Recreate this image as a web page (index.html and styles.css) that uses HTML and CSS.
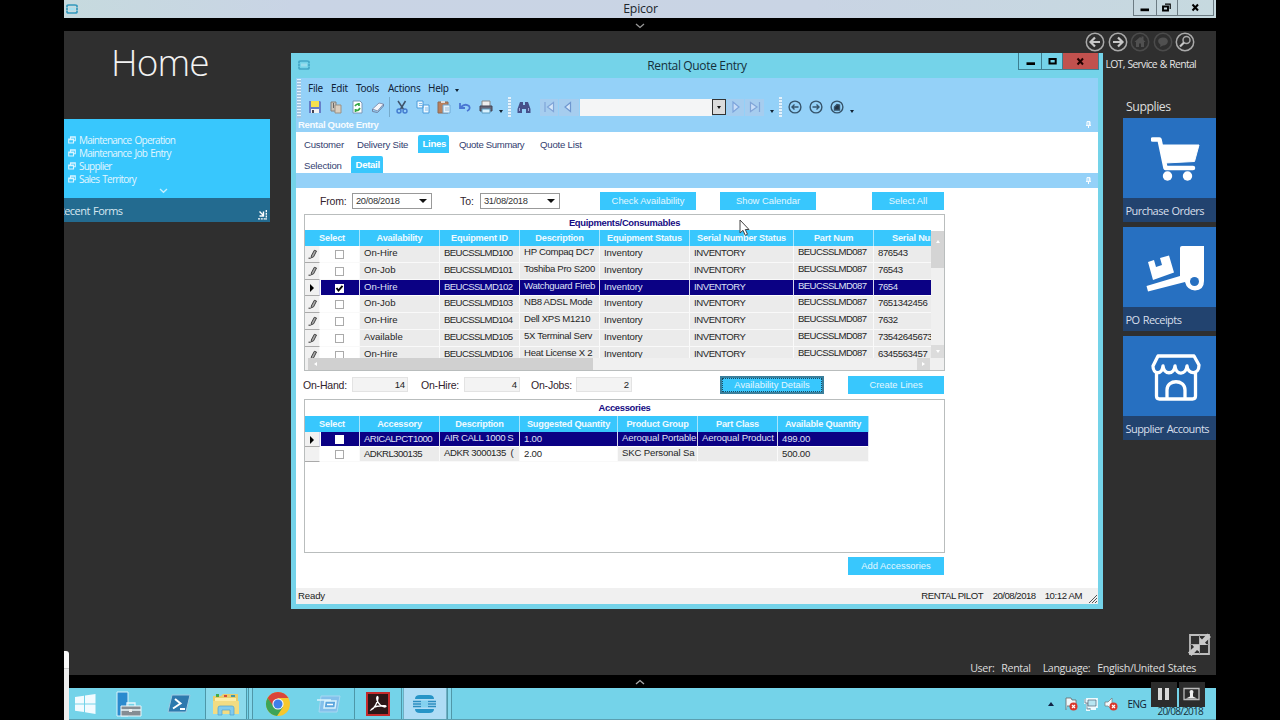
FILE: index.html
```html
<!DOCTYPE html>
<html lang="en">
<head>
<meta charset="utf-8">
<title>Epicor</title>
<link rel="stylesheet" href="styles.css">
</head>
<body>
<svg width="0" height="0" class="defs">
  <symbol id="forms" viewBox="0 0 8 8"><path d="M2.500 3V.8h4.800v4H5.500M.7 3h4.800v4H.7zM.7 3.600h4.800M2.500 1.300h4.800" fill="none" stroke="#d9f4ff" stroke-width="1.100"/></symbol>
  <symbol id="pencil" viewBox="0 0 10 10"><path d="M3.300 7 6.300 1.300 8.500 2 5.600 7.800 3.300 8.800z" fill="#aaa" stroke="#333" stroke-width=".9"/><path d="M.5 9.200h2.300" stroke="#333"/></symbol>
  <symbol id="pin" viewBox="0 0 5 7"><path d="M1 4V.6h3V4M0 4.400h5M2.500 4.500V7M3.200 1v3" fill="none" stroke="#fff"/></symbol>
  <symbol id="epicor" viewBox="0 0 12 10"><path d="M1 3.500V2q0-1 2-1h6q2 0 2 1v1.500M1 6.500V8q0 1 2 1h6q2 0 2-1V6.500M1 4v2M11 4v2" fill="none" stroke="#3399bd" stroke-width="1.700"/><path d="M3 3.500h6v3H3z" fill="#a7e0ef"/></symbol>
</svg>
<div class="screen">
  <header class="appbar">
    <svg class="applogo" width="12" height="10"><use href="#epicor"/></svg>
    <span class="apptitle">Epicor</span>
    <div class="appbtns">
      <span class="wb w23"><svg width="9" height="9"><path d="M.5 5.500h8.500v2.700H.5z"/></svg></span>
      <span class="wb w21"><svg width="9" height="9" fill="none" stroke="#000"><path d="M1 3.500h5v4H1z" stroke-width="1.900"/><path d="M3 1.200h5.200V6" stroke-width="1.200"/></svg></span>
      <span class="wb w36"><svg width="9" height="9"><path d="M1.500 1.500 7 7.500M7 1.500 1.500 7.500" stroke="#000" stroke-width="2"/></svg></span>
    </div>
  </header>
  <div class="strip"><svg width="10" height="6"><path d="M1 1l4 3.500L9 1" fill="none" stroke="#999" stroke-width="1.300"/></svg></div>

  <main class="desktop">
    <section class="left">
      <h1>Home</h1>
      <div class="recent">
        <ul>
          <li><svg width="8" height="8"><use href="#forms"/></svg>Maintenance Operation</li>
          <li><svg width="8" height="8"><use href="#forms"/></svg>Maintenance Job Entry</li>
          <li><svg width="8" height="8"><use href="#forms"/></svg>Supplier</li>
          <li><svg width="8" height="8"><use href="#forms"/></svg>Sales Territory</li>
        </ul>
        <svg class="more" width="9" height="6"><path d="M1 1l3.500 3.300L8 1" fill="none" stroke="#c5efff" stroke-width="1.300"/></svg>
        <div class="recentfoot"><span>Recent Forms</span><svg width="10" height="10"><path d="M1.500 1.500 5 5M5.500 1.500V6H1.500" fill="none" stroke="#fff" stroke-width="1.400"/><path d="M8.300 0v9.500M0 8.800h9" stroke="#fff" stroke-width="1.300" stroke-dasharray="2 .8"/></svg></div>
      </div>
    </section>

    <section class="right">
      <div class="nav">
        <svg width="20" height="20"><circle cx="10" cy="10" r="8.700"/><path d="M15 10H6M10 5.500 5.500 10l4.500 4.500" class="thick"/></svg>
        <svg width="20" height="20"><circle cx="10" cy="10" r="8.700"/><path d="M5 10h9M10 5.500l4.500 4.500-4.500 4.500" class="thick"/></svg>
        <svg class="dim" width="20" height="20"><circle cx="10" cy="10" r="8.700"/><path d="M4.500 10 10 5l1.500 1V4.500h2V8l2 2h-1.500v5h-3v-3.500H9V15H6v-5z" fill="#505050" stroke="none"/></svg>
        <svg class="dim" width="20" height="20"><circle cx="10" cy="10" r="8.700"/><path d="M10 5.500c7 0 6 8 0 8l-3 1.500.5-2.300C3.500 10 5 5.500 10 5.500z" fill="#505050" stroke="none"/></svg>
        <svg width="20" height="20"><circle cx="10" cy="10" r="8.700"/><circle cx="11.500" cy="8" r="3.500" class="mid"/><path d="M9 10.500 5 14.500" class="thick"/></svg>
      </div>
      <div class="company">LOT, Service &amp; Rental</div>
      <h2>Supplies</h2>
      <div class="tile"><div class="pic"><svg width="50" height="46" viewBox="0 0 50 46"><path d="M1.500 3.500h7L14.500 32H42" fill="none" stroke="#fff" stroke-width="4.500" stroke-linejoin="round" stroke-linecap="round"/><path d="M10.500 9H48L43.500 25.500 14 27z" fill="#fff" stroke="#fff" stroke-linejoin="round"/><circle cx="16.500" cy="40" r="4.700" fill="#fff"/><circle cx="36.500" cy="40" r="4.700" fill="#fff"/></svg></div><p>Purchase Orders</p></div>
      <div class="tile"><div class="pic"><svg class="truck" width="60" height="48" viewBox="0 0 60 48"><path d="M2 18l6-2 2 7 6-2-2-7 9-2.500 5 17L7 36zM34 4q0-2 2-2h22v35q0 9-9 9.500-8-.5-10-8.500L2 47.500.500 42 34 32z" fill="#fff"/><circle cx="48.500" cy="37.500" r="4.500" fill="#2770c1"/></svg></div><p>PO Receipts</p></div>
      <div class="tile"><div class="pic"><svg width="50" height="48" viewBox="0 0 50 48" fill="none" stroke="#fff" stroke-width="3.300" stroke-linejoin="round"><path d="M7 3h36l5 9c0 10-11 10-12 1-1 9-11 10-12 0-1 9-11 9-12 0-1 9-10 9-10 0zM5.500 20v23q0 3 3 3h33q3 0 3-3V20M16 46V37c0-11 18-11 18 0v9"/></svg></div><p>Supplier Accounts</p></div>
    </section>

    <svg class="restore" width="24" height="24"><path d="M2 2h19v19H2z" fill="none" stroke="#bdbdbd" stroke-width="1.800"/><path d="M11.500 2v19M2 11.500h19" fill="none" stroke="#999"/><path d="M11.500 4v8H19l-2-2.500 6-5.500L19.500.5 14 6.500zM11.500 19v-7.500H4l2 2.500-6 5.500L3.500 23l5.500-6z" fill="#c9c9c9"/></svg>
    <div class="userline"><span>User:</span><span>Rental</span><span>Language:</span><span>English/United States</span></div>

    <section class="window">
      <div class="titlebar">
        <svg class="wlogo" width="12" height="10"><use href="#epicor"/></svg>
        <span class="wtitle">Rental Quote Entry</span>
        <div class="winbtns">
          <span class="wb w23"><svg width="9" height="9"><path d="M.5 5.300h8.500V8H.5z"/></svg></span>
          <span class="wb w21"><svg width="9" height="9"><path d="M1.500 2h6.200v4.500H1.500z" fill="none" stroke="#000" stroke-width="2"/></svg></span>
          <span class="wb close"><svg width="9" height="9"><path d="M1.500 1.500 7 7.500M7 1.500 1.500 7.500" stroke="#200" stroke-width="2"/></svg></span>
        </div>
      </div>
      <div class="client">
        <div class="menus">
          <i class="grip"></i>
          <nav class="menu"><span class="m1">File</span><span class="m2">Edit</span><span class="m3">Tools</span><span class="m4">Actions</span><span class="m5">Help</span><i class="dd"></i></nav>
          <div class="tools">
            <span class="ic"><svg width="14" height="14"><path d="M1 1h11l1 1v11H1z" fill="#667fc9"/><path d="M3 1h8v6H3z" fill="#f7e14c"/><path d="M3 9h8v4H3z" fill="#f2f2f2"/><path d="M4 10h2v3H4z" fill="#445"/></svg></span>
            <span class="ic"><svg width="14" height="14"><path d="M2 2h5v9H2z" fill="#c9c4bb" stroke="#84817d"/><path d="M6 5h6v8H6z" fill="#dbcfc0" stroke="#9b9184"/><path d="M4.500 8V3" stroke="#666"/></svg></span>
            <span class="ic"><svg width="14" height="14"><path d="M3 1h7l2 2v10H3z" fill="#fff" stroke="#7c98b8"/><path d="M5 6q2-3 4.500-1M10 8q-2 4-4.500 1.500M9 3v3M5.500 12V9" fill="none" stroke="#35a845" stroke-width="1.700"/></svg></span>
            <span class="ic"><svg width="14" height="14"><path d="M1.500 9 8 3l4.500 1-6 7z" fill="#f4f5fa" stroke="#8796b5"/><path d="M1.500 9v2.500l5 1L12.500 6V4" fill="none" stroke="#7182a3"/></svg></span>
            <i class="sep"></i>
            <span class="ic"><svg width="14" height="14"><path d="M3 1l6 9M10.500 1 5 10" stroke="#3f526a" stroke-width="1.500"/><circle cx="4" cy="11" r="2" fill="none" stroke="#437bd0" stroke-width="1.400"/><circle cx="10" cy="11" r="2" fill="none" stroke="#437bd0" stroke-width="1.400"/></svg></span>
            <span class="ic"><svg width="14" height="14"><path d="M1 1h6v7H1zM7 5h6v8H7z" fill="#eef8ff" stroke="#4d9cdb"/><path d="M3 3.500h3M3 5.500h3M9 8h3M9 10h3" stroke="#81bce9"/></svg></span>
            <span class="ic"><svg width="14" height="14"><path d="M1 2h10v11H1z" fill="#b9805d" stroke="#8d6b56"/><path d="M4 1h4v2H4z" fill="#ddd"/><path d="M6 5h7v8H6z" fill="#e6f3fc" stroke="#6eaad6"/><path d="M8 8h4M8 10h4" stroke="#98bbd8"/></svg></span>
            <span class="ic"><svg width="14" height="14"><path d="M2 3v5h5M3 7q4-4 8-1 2 3-2 5" fill="none" stroke="#4976d3" stroke-width="1.800"/></svg></span>
            <span class="ic"><svg width="14" height="14"><path d="M3 1h8v6H3z" fill="#eee" stroke="#888"/><path d="M1 6h12v5H1z" fill="#667" stroke="#445"/><path d="M3 9h8v4H3z" fill="#d9f2ff" stroke="#5b9cc1"/></svg></span>
            <i class="dd t1"></i><i class="grip small"></i>
            <span class="ic bino"><svg width="14" height="14"><path d="M3 2h3v3h2V2h3l2.500 7v4H9V9H5v4H.500V9z" fill="#46518b"/><path d="M2.500 8v3M11.500 8v3" stroke="#9ea9d8"/></svg></span>
            <span class="nb b1"><svg width="12" height="12"><path d="M2 1v10M10.500 1.500v9L4.500 6z" fill="#d5e7fa" stroke="#80a5d8" stroke-width="1.200"/></svg></span>
            <span class="nb b2"><svg width="12" height="12"><path d="M8.500 1.500v9L3 6z" fill="#d5e7fa" stroke="#6f97d0" stroke-width="1.200"/></svg></span>
            <span class="search"></span><span class="combo"><i class="tri"></i></span>
            <span class="nb b3"><svg width="12" height="12"><path d="M3 1v10L9 6z" fill="#c8ddf8" stroke="#7ca4dc" stroke-width="1.200"/></svg></span>
            <span class="nb b4"><svg width="12" height="12"><path d="M1.500 1.500v9L8 6zM10.500 1v10" fill="#c8ddf8" stroke="#80a5d8" stroke-width="1.200"/></svg></span>
            <i class="dd t2"></i><i class="grip small g2"></i>
            <span class="ic"><svg width="14" height="14" class="rnd"><circle cx="7" cy="7" r="5.900"/><path d="M10.500 7H4M6.500 4.500 4 7l2.500 2.500"/></svg></span>
            <span class="ic"><svg width="14" height="14" class="rnd"><circle cx="7" cy="7" r="5.900"/><path d="M3.500 7H10M7.500 4.500 10 7 7.500 9.500"/></svg></span>
            <span class="ic"><svg width="14" height="14" class="rnd"><circle cx="7" cy="7" r="5.900"/><path d="M4.500 7 7 4.500 9.500 5v5h-5z" fill="#234"/></svg></span>
            <i class="dd t3"></i>
          </div>
          <div class="caption"><b>Rental Quote Entry</b><svg width="5" height="7"><use href="#pin"/></svg></div>
        </div>
        <div class="tabs">
          <div class="tabrow"><span class="k1">Customer</span><span class="k2">Delivery Site</span><span class="on k3">Lines</span><span class="k4">Quote Summary</span><span class="k5">Quote List</span></div>
          <div class="tabrow"><span class="k6">Selection</span><span class="on k7">Detail</span></div>
        </div>
        <div class="band"><svg width="5" height="7"><use href="#pin"/></svg></div>
        <div class="body">
          <div class="filters">
            <label class="f1">From:</label><span class="date">20/08/2018<i class="tri"></i></span>
            <label class="f2">To:</label><span class="date">31/08/2018<i class="tri"></i></span>
            <button class="c1">Check Availability</button><button class="c2">Show Calendar</button><button class="c3">Select All</button>
          </div>
          <div class="grid equip">
            <div class="gtitle">Equipments/Consumables</div>
            <div class="garea">
              <div class="gview">
                <div class="row head"><span class="sel">Select</span><span>Availability</span><span>Equipment ID</span><span>Description</span><span>Equipment Status</span><span>Serial Number Status</span><span>Part Num</span><span class="last">Serial Number</span></div>
                <div class="rows">
                <div class="row"><span class="rs"><svg width="10" height="10"><use href="#pencil"/></svg></span><span class="ck"><i></i></span><span>On-Hire</span><span class="id">BEUCSSLMD100</span><span class="ds">HP Compaq DC7</span><span class="in">Inventory</span><span class="iv">INVENTORY</span><span class="pn">BEUCSSLMD087</span><span class="sn">876543</span></div>
                <div class="row"><span class="rs"><svg width="10" height="10"><use href="#pencil"/></svg></span><span class="ck"><i></i></span><span>On-Job</span><span class="id">BEUCSSLMD101</span><span class="ds">Toshiba Pro S200</span><span class="in">Inventory</span><span class="iv">INVENTORY</span><span class="pn">BEUCSSLMD087</span><span class="sn">76543</span></div>
                <div class="row cur"><span class="rs"><i class="ptr"></i></span><span class="ck"><i><svg width="9" height="9"><path d="M1.500 4 3.500 6.500 7.500 1.800" fill="none" stroke="#000" stroke-width="1.900"/></svg></i></span><span>On-Hire</span><span class="id">BEUCSSLMD102</span><span class="ds">Watchguard Fireb</span><span class="in">Inventory</span><span class="iv">INVENTORY</span><span class="pn">BEUCSSLMD087</span><span class="sn">7654</span></div>
                <div class="row"><span class="rs"><svg width="10" height="10"><use href="#pencil"/></svg></span><span class="ck"><i></i></span><span>On-Job</span><span class="id">BEUCSSLMD103</span><span class="ds">NB8 ADSL Mode</span><span class="in">Inventory</span><span class="iv">INVENTORY</span><span class="pn">BEUCSSLMD087</span><span class="sn">7651342456</span></div>
                <div class="row"><span class="rs"><svg width="10" height="10"><use href="#pencil"/></svg></span><span class="ck"><i></i></span><span>On-Hire</span><span class="id">BEUCSSLMD104</span><span class="ds">Dell XPS M1210</span><span class="in">Inventory</span><span class="iv">INVENTORY</span><span class="pn">BEUCSSLMD087</span><span class="sn">7632</span></div>
                <div class="row"><span class="rs"><svg width="10" height="10"><use href="#pencil"/></svg></span><span class="ck"><i></i></span><span>Available</span><span class="id">BEUCSSLMD105</span><span class="ds">5X Terminal Serv</span><span class="in">Inventory</span><span class="iv">INVENTORY</span><span class="pn">BEUCSSLMD087</span><span class="sn">73542645673</span></div>
                <div class="row"><span class="rs"><svg width="10" height="10"><use href="#pencil"/></svg></span><span class="ck"><i></i></span><span>On-Hire</span><span class="id">BEUCSSLMD106</span><span class="ds">Heat License X 2</span><span class="in">Inventory</span><span class="iv">INVENTORY</span><span class="pn">BEUCSSLMD087</span><span class="sn">6345563457</span></div>
                </div>
              </div>
              <div class="vbar"><span class="vthumb"><i class="up"></i></span><span class="vend"><i class="down"></i></span></div>
            </div>
            <div class="hbar"><span class="hthumb"><i class="lt"></i></span><span class="hend"><i class="rt"></i></span></div>
          </div>
          <div class="totals">
            <label class="l1">On-Hand:</label><span class="num">14</span>
            <label class="l2">On-Hire:</label><span class="num">4</span>
            <label class="l3">On-Jobs:</label><span class="num">2</span>
            <button class="focus">Availability Details</button><button class="cl">Create Lines</button>
          </div>
          <div class="grid acc">
            <div class="gtitle">Accessories</div>
            <div class="row head"><span class="sel">Select</span><span>Accessory</span><span>Description</span><span>Suggested Quantity</span><span>Product Group</span><span>Part Class</span><span>Available Quantity</span></div>
            <div class="row cur"><span class="rs"><i class="ptr"></i></span><span class="ck"><i></i></span><span class="ac">ARICALPCT1000</span><span class="ad">AIR CALL 1000 S</span><span class="qt">1.00</span><span class="pg">Aeroqual Portable</span><span class="pg">Aeroqual Product</span><span class="aq">499.00</span></div>
            <div class="row"><span class="rs"></span><span class="ck"><i></i></span><span class="ac">ADKRL300135</span><span class="ad">ADKR 3000135&nbsp; (</span><span class="qt white">2.00</span><span class="pg">SKC Personal Sa</span><span></span><span class="aq">500.00</span></div>
          </div>
          <button class="add">Add Accessories</button>
        </div>
        <div class="status"><span>Ready</span><span class="s2">RENTAL PILOT</span><span class="s3">20/08/2018</span><span class="s4">10:12 AM</span><svg width="9" height="9"><path d="M1 9 9 1M4 9 9 4M7 9l2-2" stroke="#555"/></svg></div>
      </div>
    </section>
    <svg class="cursor" width="11" height="18"><path d="M1 1v13l3-2.700 2.200 5 2.300-1-2.200-4.800H10z" fill="#fff" stroke="#444"/></svg>
  </main>

  <div class="strip low"><svg width="10" height="6"><path d="M1 5l4-3.500L9 5" fill="none" stroke="#aaa" stroke-width="1.300"/></svg></div>
  <footer class="taskbar">
    <div class="task start"><svg width="22" height="20"><path d="M1 3l9-1.300V9.500H1zM11 1.500 21.500 0v9.500H11zM1 10.500h9V18l-9-1.200zM11 10.500h10.500V20L11 18.300z" fill="#f2fbff"/></svg></div>
    <div class="task server"><svg width="26" height="26"><path d="M1 1h11v24H1z" fill="#2a8ace" stroke="#d9f3fb"/><path d="M5 15h20v10H5z" fill="#858d93" stroke="#e9f7fb"/><path d="M11 15v-3h8v3M5 19h20" fill="none" stroke="#e9f7fb" stroke-width="1.300"/><path d="M13 18h3v3h-3z" fill="#eee"/></svg></div>
    <div class="task ps"><svg width="24" height="20"><path d="M5 1h18l-4 17H1z" fill="#2d79ae" stroke="#9fcbe2"/><path d="M8 5l5.500 4.500L6 14.500M13 15h5" fill="none" stroke="#fff" stroke-width="2"/></svg></div>
    <div class="task folder"><svg width="28" height="24"><path d="M1 4h8l2-2h15v20H1z" fill="#e9cd6c"/><path d="M3 6h21v14H3z" fill="#faedaa"/><path d="M4 2h3v3H4z" fill="#45ab48"/><path d="M12 3h3v2h-3z" fill="#d54c3a"/><path d="M19 3h4v2h-4z" fill="#49a"/><path d="M1 9h26v13H1z" fill="#f2dc83"/><path d="M6 23v-7q0-2 2-2h12q2 0 2 2v7h-4v-5h-8v5z" fill="#82cbed" stroke="#4fa2d1" stroke-width=".7"/></svg></div>
    <i class="bar"></i>
    <div class="task chrome"><svg width="26" height="26"><circle cx="13" cy="13" r="12" fill="#f6c72d"/><path d="M2.600 7A12 12 0 0 1 23.400 7H13L8 16z" fill="#d9453a"/><path d="M2.600 7A12 12 0 0 0 12 25l6-9H9z" fill="#3da457"/><circle cx="13" cy="13" r="5.600" fill="#f5f7fa"/><circle cx="13" cy="13" r="4.500" fill="#3f7fe8"/></svg></div>
    <div class="task app"><svg width="24" height="18"><path d="M4 1h19l-3 16H2z" fill="#83c0eb" stroke="#a8d8f2"/><path d="M0 5h14M8 6h11l-1 7H7z" stroke="#d9f2fc" stroke-width="1.500" fill="#5ba5dd"/><path d="M10 9.500h6" stroke="#fff" stroke-width="1.500"/></svg></div>
    <div class="task adobe"><svg width="24" height="24"><path d="M1 1h22v22H1z" fill="#2c1718" stroke="#c42b2c" stroke-width="2"/><path d="M5 18c3-1 7-8 7-12 0-3-2-1-1 2 1 4 5 7 8 7 3-1-1-2-5-1-4 0-8 2-9 4z" fill="none" stroke="#fff" stroke-width="1.300"/></svg></div>
    <div class="task active"><svg width="25" height="20"><path d="M3 5Q3 1 8 1h9q5 0 5 4zM3 15q0 4 5 4h9q5 0 5-4z" fill="#2694c7"/><path d="M1 7.500h8M1 10h8M1 12.500h8M16 7.500h8M16 10h8M16 12.500h8" stroke="#2b8dc0" stroke-width="1.500"/><path d="M9 6.500h7v7H9z" fill="#83d1ef"/></svg></div>
    <i class="bar b"></i>
    <div class="tray">
      <i class="trayup"></i>
      <svg width="14" height="14"><path d="M2 13V1h5l1 2h4v6H3" fill="#eef7fa" stroke="#666" stroke-width=".8"/><circle cx="9.500" cy="9.500" r="4" fill="#d9382d"/><path d="M8 8l3 3M11 8l-3 3" stroke="#fff" stroke-width="1.200"/></svg>
      <svg width="14" height="14"><path d="M3 2h10v8H3zM6 12h6M9 10v2M1 2v4h3M3 6v7h3" fill="#b8e5f1" stroke="#eefbff" stroke-width="1.800"/><path d="M4 3h8v6H4zM1 2v4h3M3 6v6h4" fill="none" stroke="#567" stroke-width=".7"/></svg>
      <svg width="14" height="14"><path d="M1 5h3l4-4v12L4 9H1z" fill="#f3fbff" stroke="#777" stroke-width=".7"/><circle cx="9.500" cy="9.500" r="4" fill="#d9382d"/><path d="M8 8l3 3M11 8l-3 3" stroke="#fff" stroke-width="1.200"/></svg>
      <span class="eng">ENG</span>
      <span class="day">20/08/2018</span>
    </div>
  </footer>
  <div class="sidepanel"></div>
  <div class="controls">
    <span><svg width="26" height="25"><path d="M7 6h4v12H7zM14 6h4v12h-4z" fill="#d8d8d8"/></svg></span>
    <span><svg width="26" height="25"><path d="M5 6.500h15v11H5z" fill="none" stroke="#bbb" stroke-width="1.300"/><circle cx="12.500" cy="10" r="2" fill="#eee"/><path d="M7 16.500l4-2V11h3v3.500l4 2z" fill="#eee"/></svg></span>
  </div>
</div>
</body>
</html>
```
FILE: styles.css
```css
* { box-sizing: border-box; }
body { margin: 0; width: 1280px; height: 720px; overflow: hidden; background: #000; font-family: "Liberation Sans", Arial, sans-serif; font-size: 9.6px; color: #222; }
svg { display: block; flex: none; }
i { display: block; flex: none; }
h1, h2, p, ul { margin: 0; padding: 0; font-weight: 400; list-style: none; }
button { border: 0; padding: 0; font: inherit; }
.defs { position: absolute; }
.screen { position: relative; width: 1152px; height: 720px; margin: 0 auto; display: flex; flex-direction: column; overflow: hidden; }

.appbar { height: 18px; flex: none; display: flex; align-items: center; justify-content: space-between; background: linear-gradient(90deg, #c6dade, #c9d4e5 20%, #c9d4e4 65%, #c6d9df); font-family: "Open Sans", sans-serif; }
.applogo { margin-left: 2px; }
.apptitle { font-size: 12.3px; letter-spacing: -.2px; line-height: 18px; color: #20262c; margin-left: 70px; }
.appbtns { display: flex; align-self: flex-start; padding-right: 2px; }
.wb { height: 16px; display: flex; align-items: center; justify-content: center; border: 1px solid #6c7b83; border-top: 0; border-right-width: 0; }
.wb:last-child { border-right-width: 1px; }
.w23 { width: 23px; } .w21 { width: 21px; } .w36 { width: 37px; }
.strip { height: 13px; flex: none; display: flex; align-items: center; justify-content: center; background: #000; padding-top: 2px; }
.low { padding-top: 0; }

.desktop { position: relative; height: 644px; flex: none; display: flex; justify-content: space-between; background: #2f2f2f; font-family: "Open Sans", sans-serif; }
h1 { height: 88px; padding-left: 47px; padding-top: 3px; font-weight: 300; font-size: 37px; line-height: 56px; letter-spacing: -.9px; color: #f2f2f2; }
.recent { width: 206px; height: 103px; background: #38c7fd; display: flex; flex-direction: column; }
.recent ul { padding: 15px 0 0 4px; height: 67px; }
.recent li { display: flex; align-items: center; gap: 3px; height: 12.8px; font-size: 10px; letter-spacing: -.75px; word-spacing: 1.3px; color: #e2f6ff; white-space: nowrap; }
.more { margin: 2px 0 0 95px; }
.recentfoot { margin-top: auto; height: 24px; background: #236b90; color: #d7e8f0; font-size: 11px; letter-spacing: -.55px; word-spacing: 1px; display: flex; align-items: center; justify-content: space-between; padding: 0 2px 0 0; overflow: hidden; }
.recentfoot span { margin: 1px 0 0 -6px; }
.recentfoot svg { margin-top: 10px; }

.right { width: 122px; display: flex; flex-direction: column; align-items: flex-end; }
.nav { display: flex; gap: 2.400px; padding: 1px 21px 0 0; }
.nav svg { fill: none; stroke: #aaa; stroke-width: 1.500; }
.nav .thick { stroke-width: 2.200; stroke: #c8c8c8; }
.nav .dim { stroke: #4b4b4b; }
.company { color: #e4e4e4; font-size: 10.4px; letter-spacing: -.68px; word-spacing: .7px; line-height: 16px; padding: 4px 20px 0 0; white-space: nowrap; }
h2 { width: 93px; height: 46px; padding: 26px 0 0 3px; font-size: 12.300px; letter-spacing: -.45px; line-height: 18px; color: #ddd; }
.tile { width: 93px; height: 104px; margin-bottom: 5px; background: #2770c1; flex: none; }
.pic { height: 80px; display: flex; align-items: center; padding-left: 28px; }
.pic svg { margin-top: 1px; }
.pic .truck { margin-left: -5px; }
.tile p { height: 24px; background: #22436f; color: #d7dfeb; font-size: 11px; letter-spacing: -.55px; word-spacing: .8px; line-height: 25px; padding-left: 2.500px; white-space: nowrap; }
.restore { position: absolute; left: 1124px; top: 602px; }
.userline { position: absolute; right: 20px; bottom: -1px; display: flex; gap: 7px; color: #ddd; font-size: 10.700px; letter-spacing: -.38px; word-spacing: .8px; line-height: 15px; white-space: nowrap; }
.userline span:nth-child(3) { margin-left: 5px; }

.window { position: absolute; left: 227px; top: 22px; width: 812px; height: 556px; background: #74d3e9; padding: 0 5px 5px; display: flex; flex-direction: column; }
.titlebar { height: 25px; flex: none; display: flex; align-items: flex-start; justify-content: space-between; }
.wlogo { margin: 7px 0 0 2px; opacity: .75; }
.wtitle { font-size: 12px; letter-spacing: -.35px; line-height: 25px; color: #14303b; margin-left: 66px; }
.winbtns { display: flex; margin-right: -1px; }
.winbtns .wb { height: 17px; border-color: #3d7e90; }
.winbtns .close { width: 37px; background: #c1514e; }
.client { flex: 1; display: flex; flex-direction: column; background: #fff; font-family: "Liberation Sans", Arial, sans-serif; min-height: 0; }
.menus { height: 54px; background: #94d1f8; flex: none; position: relative; }
.grip { width: 4px; background: repeating-linear-gradient(#e3f2fd 0 1.500px, #a3c6e0 1.500px 3px); }
.menus > .grip { position: absolute; left: 1px; top: 1px; height: 39px; }
.menu { height: 19px; display: flex; align-items: center; padding-left: 12px; font-family: "Noto Sans", sans-serif; font-size: 10px; letter-spacing: -.28px; color: #102238; }
.m1 { width: 23px; } .m2 { width: 25px; } .m3 { width: 32px; } .m4 { width: 40px; } .m5 { width: 27px; }
.dd { border: 2px solid transparent; border-top: 3px solid #123; border-bottom: 0; margin-top: 6px; width: 4px; height: 3px; }
.tools { height: 20px; display: flex; align-items: center; padding-left: 8px; }
.ic { width: 21px; display: flex; justify-content: center; flex: none; }
.sep { width: 1px; height: 20px; background: #75aacb; margin: 0 1px; }
.t1 { margin: 9px 5px 0 3px; }
.grip.small { height: 20px; width: 3px; }
.bino { margin: 0 6px 0 2px; }
.nb { height: 17px; background: #a6cdef; display: flex; align-items: center; justify-content: center; flex: none; }
.b1 { width: 18px; margin-right: 1px; } .b2 { width: 20px; padding-right: 2px; margin-right: 1px; } .b3 { width: 17px; margin: 0 1px 0 1px; } .b4 { width: 19px; }
.search { width: 132px; height: 17px; background: #f4f5f6; flex: none; }
.combo { width: 14px; height: 16px; border: 1px solid #333; background: #dcdcdc; display: flex; align-items: center; justify-content: center; flex: none; }
.tri { width: 8px; height: 4px; border: 4px solid transparent; border-top-color: #111; border-bottom: 0; }
.combo .tri { border-width: 3px 2px 0; width: 4px; height: 3px; }
.t2 { margin: 9px 5px 0 6px; }
.g2 { margin-right: 2px; }
.rnd { fill: none; stroke: #36546b; stroke-width: 1.400; }
.t3 { margin: 9px 0 0 3px; }
.caption { height: 14px; display: flex; align-items: center; justify-content: space-between; padding: 0 7px 0 2px; color: #f5fbff; font-size: 9.600px; letter-spacing: -.35px; }
.tabs { height: 41px; flex: none; }
.tabrow { display: flex; height: 20.500px; color: #33406f; white-space: nowrap; letter-spacing: -.2px; }
.tabrow span { padding-top: 7px; line-height: 12px; height: 20px; }
.tabrow .on { background: #38c7fd; color: #fff; font-weight: 700; margin-top: 3px; height: 17.500px; padding: 3px 0 0 4.500px; border-radius: 2px 2px 0 0; letter-spacing: -.3px; }
.k1 { width: 61px; padding-left: 8px; } .k2 { width: 61px; } .k3 { width: 31px; } .k4 { width: 91px; padding-left: 10px; letter-spacing: -.35px; } .k5 { width: 60px; }
.k6 { width: 55px; padding-left: 8px; } .k7 { width: 32px; }
.band { height: 14.500px; flex: none; background: #94d1f8; display: flex; justify-content: flex-end; padding: 4px 7px 0 0; }

.body { height: 400px; flex: none; padding-left: 8px; }
.filters { height: 26.500px; display: flex; align-items: flex-start; padding-top: 4px; white-space: nowrap; }
.filters label, .totals label { font-size: 10.500px; color: #32232d; line-height: 19px; }
.f1 { padding-left: 16px; width: 48px; letter-spacing: -.2px; } .f2 { padding-left: 28px; width: 48px; }
.date { width: 80px; height: 16px; border: 1px solid #999; margin-top: 1px; padding: 0 4px 0 3px; line-height: 14px; letter-spacing: -.3px; font-size: 9.300px; display: flex; align-items: center; justify-content: space-between; color: #333; }
button { background: #38c7fd; color: #e3f7ff; font-family: "Liberation Sans", Arial, sans-serif; font-size: 9.400px; letter-spacing: 0; width: 96px; height: 18px; line-height: 18px; text-align: center; }
.c1 { margin-left: 40px; } .c2 { margin-left: 24px; } .c3 { margin-left: 56px; width: 72px; }
.grid { width: 641px; border: 1px solid #b9bdbd; background: #fff; }
.gtitle { height: 15px; line-height: 15px; text-align: center; color: #160c82; font-weight: 700; font-size: 9.400px; letter-spacing: -.3px; }
.equip { height: 157px; }
.garea { display: flex; height: 128px; }
.gview { width: 626px; overflow: hidden; }
.rows { height: 112px; overflow: hidden; }
.row { display: grid; grid-template-columns: 15px 40px 80px 80px 80px 90px 104px 80px 80px; height: 16.800px; color: #262626; white-space: nowrap; }
.row > span { border-right: 1px solid #fafafa; border-bottom: 1.500px solid #f9f9f9; background: #ebebeb; padding-left: 4px; line-height: 13px; overflow: hidden; }
.head > span, .acc .head > span { background: #38c7fd; border-color: #a9e6fd; border-bottom: 0; color: #effaff; font-weight: 700; text-align: center; padding: 0; line-height: 16px; letter-spacing: -.2px; font-size: 9.200px; }
.row.head { height: 16px; }
.head .sel { grid-column: span 2; }
.row .rs { background: #f1f1f1; border-bottom: 1px solid #aaa; padding: 3px 0 0 3px; }
.row .ck { background: #fff; padding: 3px 0 0 15px; }
.ck i { width: 9px; height: 9px; border: 1px solid #aaa; background: #fff; margin-top: 1px; }
.ck i svg { margin: -1px; }
.cur > span { background: #0b0184; color: #dfe0f5; border-color: #d8d8ee; border-bottom-color: #fff; }
.row.cur .ck { background: #0b0184; border-left: 1px solid #fff; padding-left: 14px; }
.cur .ck i { border-color: #fff; }
.ptr { border: 4px solid transparent; border-left: 4px solid #000; border-right: 0; width: 4px; height: 8px; margin: 1px 0 0 2px; }
.id { letter-spacing: -.6px; }
.row .ds { letter-spacing: -.3px; line-height: 12px; }
.iv { letter-spacing: -.45px; }
.row .pn { letter-spacing: -.6px; line-height: 12px; }
.sn { letter-spacing: -.4px; }
.equip .head .last { padding-left: 18px; text-align: left; }
.in { letter-spacing: -.1px; }
.vbar { width: 13px; background: #f0f0f0; display: flex; flex-direction: column; justify-content: space-between; }
.vthumb { height: 38px; background: #d4d4d4; display: flex; justify-content: center; padding-top: 9px; border-top: 1px solid #fff; }
.vend { height: 13px; background: #dcdcdc; display: flex; align-items: center; justify-content: center; }
.up { width: 4px; height: 3px; border: 2px solid transparent; border-bottom: 3px solid #fff; border-top: 0; }
.down { width: 4px; height: 3px; border: 2px solid transparent; border-top: 3px solid #fff; border-bottom: 0; }
.hbar { height: 12px; display: flex; justify-content: space-between; background: #f0f0f0; padding: 0 14px 0 3px; }
.hthumb { width: 285px; background: #d0d0d0; display: flex; align-items: center; padding-left: 6px; }
.hend { width: 13px; background: #d8d8d8; display: flex; align-items: center; justify-content: center; }
.lt { width: 3px; height: 4px; border: 2px solid transparent; border-right: 3px solid #fff; border-left: 0; }
.rt { width: 3px; height: 4px; border: 2px solid transparent; border-left: 3px solid #fff; border-right: 0; }
.totals { display: flex; height: 28px; padding-top: 5px; white-space: nowrap; }
.totals label { line-height: 18px; letter-spacing: -.2px; margin-left: -1px; }
.l1 { width: 49px; } .l2 { width: 57px; padding-left: 14px; } .l3 { width: 57px; padding-left: 12px; }
.num { width: 56px; height: 15px; background: #f3f3f3; border: 1px solid #e3e3e3; text-align: right; padding-right: 2px; line-height: 13px; margin-top: 1px; letter-spacing: -.2px; }
.totals button { margin-left: 24px; }
.totals .focus { width: 104px; margin-left: 88px; border: 2px solid #3a7f9c; outline: 1px dotted #164d66; outline-offset: -3px; line-height: 14px; }
.acc { height: 154px; }
.acc .row { grid-template-columns: 15px 40px 80px 80px 98px 80px 80px 91px; height: 15px; width: 564px; }
.acc .row.head { height: 16px; }
.acc .gtitle { height: 16px; line-height: 16px; }
.acc .row > span { line-height: 13px; }
.acc .row.head > span { line-height: 16px; }
.acc .row .ck { padding-top: 2px; }
.acc .row .ad, .acc .row .pg { line-height: 12px; }
.ac { letter-spacing: -.55px; } .ad { letter-spacing: -.4px; } .qt, .aq { letter-spacing: -.2px; } .pg { letter-spacing: -.15px; }
.row .white { background: #fff; }
.add { display: block; margin: 4px 0 0 544px; }
.status { flex: 1; display: flex; align-items: center; background: #f0f0f0; padding: 0 1px 0 2px; color: #222; white-space: nowrap; letter-spacing: -.15px; }
.s2 { margin-left: auto; letter-spacing: -.45px; } .s3 { margin-left: 9.500px; letter-spacing: -.5px; } .s4 { margin-left: 9px; letter-spacing: -.4px; }
.status svg { margin: 6px 0 0 6px; }
.cursor { position: absolute; left: 675px; top: 188px; }

.taskbar { height: 32px; flex: none; background: #74d3e9; display: flex; border-bottom: 1px solid #5b9fb0; font-family: "Open Sans", sans-serif; }
.task { display: flex; align-items: center; justify-content: center; flex: none; }
.start { width: 41px; } .server { width: 50px; padding-right: 2px; } .ps { width: 49px; padding-right: 1px; }
.folder { width: 42px; border: 1px solid #4d97a8; border-width: 0 1px; background: #8bdaec; margin-left: .5px; }
.bar { width: 5px; margin-left: 1px; border: 1px solid #5097a8; border-width: 0 1px; background: #83d7eb; }
.chrome { width: 52px; padding-right: 1px; } .app { width: 49px; } .adobe { width: 48px; border: 1px solid #4d97a8; border-width: 0 1px; }
.active { width: 44px; margin-left: 1px; background: #aedcf5; border: 1px solid #6fb0c4; border-width: 0 1px; }
.bar.b { margin-left: 0; }
.tray { flex: 1; display: flex; align-items: center; justify-content: flex-end; gap: 6px; padding-right: 12px; }
.trayup { border: 3px solid transparent; border-bottom: 4px solid #124; border-top: 0; width: 6px; height: 4px; margin-right: 4px; }
.eng { font-size: 10px; letter-spacing: -.5px; color: #123; margin-left: 3px; width: 19px; }
.day { align-self: flex-end; font-size: 10px; letter-spacing: -.75px; line-height: 13px; color: #16303a; margin: 0 1px 1px 5px; }
.sidepanel { position: absolute; left: 0; top: 651px; width: 5px; height: 69px; background: linear-gradient(#fafafa 17px, #ccc 17px 18px, #eee 18px); border-radius: 0 3px 0 0; }
.controls { position: absolute; left: 1086.500px; top: 682px; display: flex; gap: 2px; }
.controls span { width: 26px; height: 25px; background: #2c2c2c; }
```
